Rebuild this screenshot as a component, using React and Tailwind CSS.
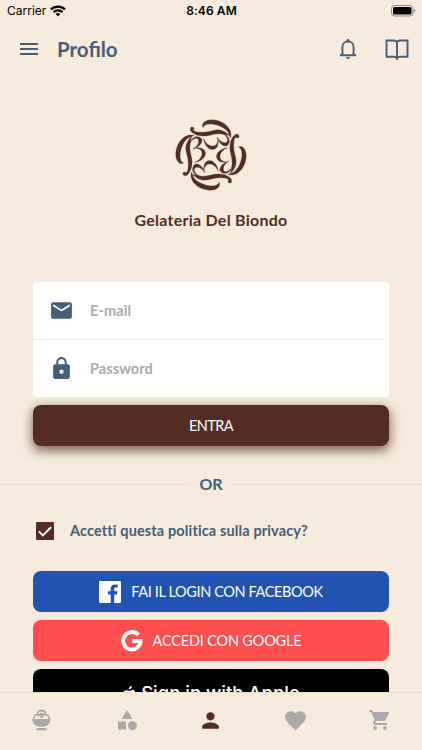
import React, { useState } from 'react';
import {
  MdCategory,
  MdEmail,
  MdFavorite,
  MdLock,
  MdMenu,
  MdPerson,
  MdShoppingCart,
} from 'react-icons/md';

const StatusBar = () => (
  <div className="grid h-[22px] grid-cols-3 items-center pl-[7px] pr-[6px] font-['Inter'] text-black">
    <div className="flex items-center gap-[4px]">
      <span className="text-[12px]">Carrier</span>
      <svg width="16" height="12" viewBox="0 0 16 12" fill="none" stroke="#000" strokeWidth="2.3">
        <path d="M1 4.4a10 10 0 0 1 14 0" />
        <path d="M3.5 7.2a6.4 6.4 0 0 1 9 0" />
        <path d="M8 11.5 5.7 9.1a3.3 3.3 0 0 1 4.6 0z" fill="#000" stroke="none" />
      </svg>
    </div>
    <span className="text-center text-[12px] font-semibold tracking-[0.1px]">8:46 AM</span>
    <svg className="justify-self-end" width="25" height="12" viewBox="0 0 25 12">
      <rect x="0.5" y="0.5" width="21.5" height="10.5" rx="3" fill="none" stroke="#8f8a82" />
      <rect x="2" y="2" width="18.5" height="7.5" rx="1.6" fill="#000" />
      <path d="M23.2 4v3.6c1.4-.5 1.4-3.1 0-3.6z" fill="#8f8a82" />
    </svg>
  </div>
);

const BellIcon = () => (
  <svg width="18" height="22" viewBox="0 0 18 22" fill="none" stroke="currentColor" strokeWidth="1.9">
    <path d="M.8 17.3h16.4M3.4 17V9.4C3.4 5.8 5.6 3.4 9 3.4s5.600 2.400 5.600 6V17" />
    <path d="M9 2.2v1" strokeWidth="2.6" strokeLinecap="round" />
    <path d="M7 19.2h4c-.2 1.2-1 1.8-2 1.8s-1.800-.6-2-1.800z" fill="currentColor" stroke="none" />
  </svg>
);

const BookIcon = () => (
  <svg width="24" height="22" viewBox="0 0 24 22" fill="none" stroke="currentColor" strokeWidth="1.9">
    <path d="M12 4.500C11.600 3.200 10.600 2.500 9 2.500H1.500v16.300h7.700c1.500 0 2.400.5 2.800 1.900.4-1.400 1.300-1.900 2.800-1.900h7.700V2.500H15c-1.600 0-2.600.7-3 2zM12 4.500v16.500" />
  </svg>
);

// one swash, repeated four times around the centre
const Swash = () => (
  <>
    <path d="M87 82C73 76 55 84 44 100C31 120 28 147 40 161C44 166 51 167 56 164C49 162 45 154 45 143C45 126 53 104 65 92C71 87 79 84 87 82z" />
    <path d="M80 84C66 98 61 112 63 126C65 139 70 151 70 166C70 181 68 191 63 193C58 189 53 192 54 198C56 204 65 203 70 197C81 184 83 164 80 150C77 135 73 123 75 110C76 99 78 92 80 84z" />
    <path d="M75 104C79 91 87 84 97 85C108 86 114 93 110 102C106 112 95 119 84 122C94 116 100 109 101 100C102 93 98 89 91 90C84 92 79 97 75 104z" />
    <path d="M92 119C106 117 118 121 121 132C124 146 108 160 89 162C101 157 110 148 111 137C112 126 105 121 92 119z" />
  </>
);

const Logo = () => (
  <svg width="76" height="76" viewBox="24 26 228 228" fill="#532d23" stroke="#532d23" strokeWidth="1">
    <g><Swash /></g>
    <g transform="rotate(90 138 140)"><Swash /></g>
    <g transform="rotate(180 138 140)"><Swash /></g>
    <g transform="rotate(270 138 140)"><Swash /></g>
  </svg>
);

const FacebookIcon = () => (
  <svg width="22" height="22" viewBox="0 0 22 22" fill="#fff">
    <path d="M1.2 0h19.6C21.5 0 22 .5 22 1.200v19.600c0 .7-.5 1.200-1.200 1.200h-5.600v-8.500h2.900l.4-3.300h-3.300V8c0-1 .3-1.600 1.700-1.600h1.700V3.500c-.3 0-1.400-.1-2.600-.1-2.500 0-4.300 1.500-4.300 4.400v2.400H8.900v3.300h2.800V22H1.200C.5 22 0 21.500 0 20.800V1.200C0 .5.5 0 1.200 0z" />
  </svg>
);

const GoogleIcon = () => (
  <svg width="22" height="22" viewBox="0 0 22 22" fill="none" stroke="#fff" strokeWidth="3.9">
    <path d="M17.5 5.100A8.700 8.700 0 1 0 19.600 11H11.200" />
  </svg>
);

const AppleIcon = () => (
  <svg width="14" height="17" viewBox="0 0 14 17" fill="#fff">
    <path d="M9.9 0c.1 1.900-1.500 3.500-3.200 3.400C6.500 1.700 8.200.1 9.900 0zM13.200 5.800c-2.300 1.400-1.900 4.600.6 5.600-.7 2.200-2.200 4.800-3.700 4.800-1 0-1.400-.6-2.700-.6s-1.700.6-2.600.6C3 16.200.5 12.700.5 9.200c0-3.200 2-5 4.100-5 1.300 0 2.100.8 2.900.8.700 0 1.700-.9 3.200-.9.900 0 1.900.5 2.500 1.700z" />
  </svg>
);

const GelatoIcon = () => (
  <svg width="20" height="22" viewBox="0 0 20 22">
    <g fill="none" stroke="currentColor" strokeWidth="1.8">
      <path d="M5.1 5.600C5.600 3 7.200 1.500 9.500 1.500S13.400 3 13.900 5.600" />
      <path d="M1.7 10.500c0-2.900 1.700-4.900 3.800-4.900 1.900 0 3.200 1 4 2.400.8-1.400 2.100-2.400 4-2.400 2.100 0 3.800 2 3.800 4.900" />
      <path d="M6.5 6.400 9.500 4.600l3 1.800" />
    </g>
    <path d="M.3 10h18.400c0 3.900-3 7-7 7.800H7.300c-4-.8-7-3.900-7-7.800z" fill="currentColor" />
    <path d="M5 19h9l1.200 2.200H3.800z" fill="currentColor" />
  </svg>
);

const App = () => {
  const [accepted, setAccepted] = useState(true);

  return (
    <div className="flex h-[750px] w-[422px] flex-col overflow-hidden bg-[#f6ebdc] font-['Lato','Open_Sans',sans-serif]">
      <StatusBar />

      <header className="flex h-[54px] items-center pl-[17px] pr-[13px] text-[#455f79]">
        <MdMenu size={24} />
        <h1 className="ml-[16px] flex-1 text-[20.5px] font-bold">Profilo</h1>
        <BellIcon />
        <span className="w-[28px]" />
        <BookIcon />
      </header>

      <main className="flex min-h-0 flex-1 flex-col overflow-hidden">
        <div className="flex shrink-0 flex-col items-center pt-[41px] text-[#532d23]">
          <Logo />
          <div className="mt-[15px] h-[24px] text-[16px] font-bold leading-[24px] tracking-[0.25px]">
            Gelateria Del Biondo
          </div>
        </div>

        <div className="mx-[33px] mt-[50px] shrink-0 rounded-[4px] bg-white">
          <label className="flex h-[58px] items-center border-b border-[#eeeeee] pl-[16px]">
            <MdEmail size={25} color="#455f79" />
            <input
              className="ml-[16px] w-[260px] text-[14.5px] font-bold tracking-[0.1px] outline-none placeholder:text-[#aaaaaa]"
              placeholder="E-mail"
            />
          </label>
          <label className="flex h-[57px] items-center pl-[16px]">
            <MdLock size={25} color="#455f79" />
            <input
              type="password"
              className="ml-[16px] w-[260px] text-[14.5px] font-bold tracking-[0.1px] outline-none placeholder:text-[#aaaaaa]"
              placeholder="Password"
            />
          </label>
        </div>

        <button className="mx-[33px] mt-[8px] h-[41px] shrink-0 rounded-[8px] bg-[#532d23] text-[14.5px] tracking-[-0.6px] text-white shadow-[0_4px_11px_1px_rgba(83,45,35,0.7)]">
          ENTRA
        </button>

        <div className="mt-[26px] flex h-[24px] shrink-0 items-center text-[#455f79]">
          <div className="h-px flex-1 bg-[#ecdfd0]" />
          <span className="w-[42px] text-center text-[16px] font-bold">OR</span>
          <div className="h-px flex-1 bg-[#ecdfd0]" />
        </div>

        <button
          className="ml-[36px] mt-[23px] flex h-[24px] shrink-0 items-center text-left"
          onClick={() => setAccepted(!accepted)}
        >
          <span className="flex size-[18px] items-center justify-center rounded-[1px] bg-[#532d23]">
            {accepted && (
              <svg width="14" height="11" viewBox="0 0 14 11" fill="none" stroke="#fff" strokeWidth="1.9">
                <path d="M.8 5.400 4.800 9.400 13.200 1" />
              </svg>
            )}
          </span>
          <span className="ml-[16px] text-[14.5px] font-bold tracking-[0.13px] text-[#455f79]">
            Accetti questa politica sulla privacy?
          </span>
        </button>

        <div className="mx-[33px] mt-[28px] flex shrink-0 flex-col gap-[8px] text-white">
          <button className="flex h-[41px] items-center justify-center gap-[10px] rounded-[8px] bg-[#2053b2] text-[14.5px] tracking-[-0.38px]">
            <FacebookIcon />
            FAI IL LOGIN CON FACEBOOK
          </button>
          <button className="flex h-[41px] items-center justify-center gap-[10px] rounded-[8px] bg-[#ff4e4e] text-[14.5px] tracking-[-0.18px]">
            <GoogleIcon />
            ACCEDI CON GOOGLE
          </button>
          <button className="flex h-[50px] items-center justify-center gap-[5px] rounded-[8px] bg-black font-['Inter'] text-[18.5px] font-medium">
            <AppleIcon />
            Sign in with Apple
          </button>
        </div>
      </main>

      <nav className="grid h-[58px] shrink-0 grid-cols-5 place-items-center border-t border-[#ecdfd0] pb-[3px] text-[#aaaaaa]">
        <GelatoIcon />
        <MdCategory size={24} />
        <MdPerson size={25} className="text-[#532d23]" />
        <MdFavorite size={25} />
        <MdShoppingCart size={24} />
      </nav>
    </div>
  );
};

export default App;
